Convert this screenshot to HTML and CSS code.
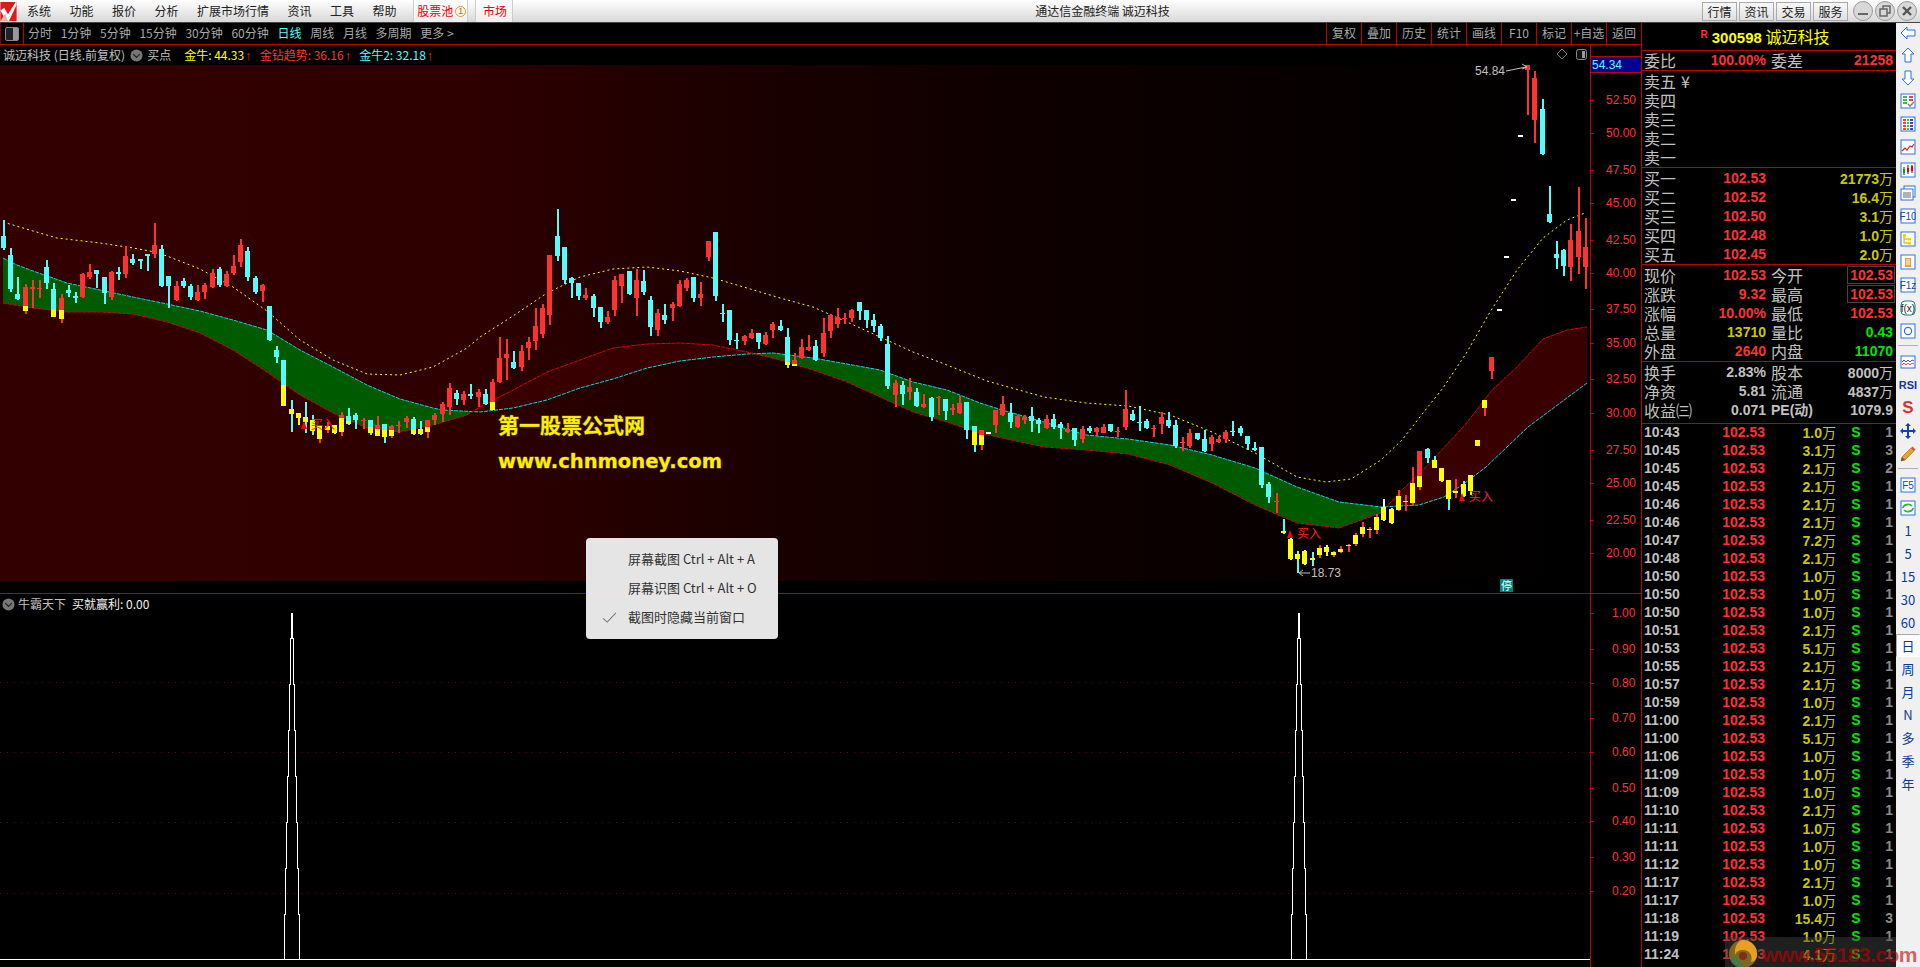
FILE: index.html
```html
<!DOCTYPE html>
<html lang="zh-CN">
<head>
<meta charset="UTF-8" />
<title>通达信金融终端 诚迈科技</title>
<link rel="stylesheet" href="styles.css">
</head>
<body>

<header class="topbar">
  <div class="menu">
    <svg class="logo" viewBox="0 0 17 20"><rect width="17" height="20" fill="#e01818"/><path d="M0 9 L4 6 L8 13 L16 0 L17 0 L17 3 L9 20 L6 20 Z" fill="#fff"/><path d="M0 20 L5 12 L8 20 Z" fill="#f4b0a0"/></svg>
    <span>系统</span><span>功能</span><span>报价</span><span>分析</span><span>扩展市场行情</span><span>资讯</span><span>工具</span><span>帮助</span>
    <span class="menu-btn pool">股票池<i class="coin">1</i></span>
    <span class="menu-btn market">市场</span>
  </div>
  <div class="app-title">通达信金融终端 诚迈科技</div>
  <div class="window-ctl">
    <span class="ctl-btn">行情</span><span class="ctl-btn">资讯</span><span class="ctl-btn">交易</span><span class="ctl-btn">服务</span>
    <svg class="round-btn" viewBox="0 0 20 20"><circle cx="10" cy="10" r="9.5" fill="#d8d8d8" stroke="#999"/><rect x="5" y="12" width="10" height="2" fill="#666"/></svg>
    <svg class="round-btn" viewBox="0 0 20 20"><circle cx="10" cy="10" r="9.5" fill="#d8d8d8" stroke="#999"/><path d="M5 8h7v7H5zM8 8V5h7v7h-3" fill="none" stroke="#666" stroke-width="1.5"/></svg>
    <svg class="round-btn" viewBox="0 0 20 20"><circle cx="10" cy="10" r="9.5" fill="#d8d8d8" stroke="#999"/><path d="M6 6l8 8M14 6l-8 8" stroke="#555" stroke-width="2.4"/></svg>
  </div>
</header>

<div class="workspace">
  <main class="charts">
    <nav class="periodbar">
      <span class="corner"><i class="corner-icon"></i></span>
      <div class="periods">
        <span>分时</span><span>1分钟</span><span>5分钟</span><span>15分钟</span><span>30分钟</span><span>60分钟</span><span class="on">日线</span><span>周线</span><span>月线</span><span>多周期</span><span>更多 &gt;</span>
      </div>
      <div class="chart-btns">
        <span>复权</span><span>叠加</span><span>历史</span><span>统计</span><span>画线</span><span>F10</span><span>标记</span><span>+自选</span><span>返回</span>
      </div>
    </nav>

    <section class="pane pane-main">
      <svg id="mainChart" class="plot" viewBox="0 45 1641 548"></svg>
      <div class="legend">
        <span class="gray">诚迈科技 (日线.前复权)</span>
        <svg class="chevron" viewBox="0 0 14 14"><circle cx="7" cy="7" r="6.5" fill="#777"/><path d="M3.5 5.5L7 9l3.5-3.5" fill="none" stroke="#222" stroke-width="1.4"/></svg>
        <span class="gray">买点</span>
        <span class="yellow ind">金牛: 44.33<b>↑</b></span>
        <span class="red ind2">金钻趋势: 36.16<b>↑</b></span>
        <span class="cyan ind2">金牛2: 32.18<b>↑</b></span>
      </div>
    </section>

    <section class="pane pane-sub">
      <svg id="subChart" class="plot" viewBox="0 594 1641 373"></svg>
      <div class="legend">
        <svg class="chevron first" viewBox="0 0 14 14"><circle cx="7" cy="7" r="6.5" fill="#777"/><path d="M3.5 5.5L7 9l3.5-3.5" fill="none" stroke="#222" stroke-width="1.4"/></svg>
        <span class="gray">牛霸天下</span>
        <span class="white">买就赢利: 0.00</span>
      </div>
    </section>

    <div class="shot-menu">
      <div class="shot-item">屏幕截图 Ctrl + Alt + A</div>
      <div class="shot-item">屏幕识图 Ctrl + Alt + O</div>
      <div class="shot-item"><svg class="tick" viewBox="0 0 16 12"><path d="M1 7l4.5 4L15 1" fill="none" stroke="#777" stroke-width="1.1"/></svg>截图时隐藏当前窗口</div>
    </div>
  </main>

  <aside class="quote">
    <div class="stock-head"><sup>R</sup><b>300598</b> <span>诚迈科技</span></div>

    <div class="q-block single">
      <div class="q-row"><span>委比</span><b class="red">100.00%</b><span class="l2">委差</span><b class="red">21258</b></div>
    </div>

    <div class="q-block">
      <div class="q-row"><span>卖五</span><span class="yen">¥</span></div>
      <div class="q-row"><span>卖四</span></div>
      <div class="q-row"><span>卖三</span></div>
      <div class="q-row"><span>卖二</span></div>
      <div class="q-row"><span>卖一</span></div>
    </div>

    <div class="q-block">
      <div class="q-row"><span>买一</span><b class="red">102.53</b><span class="l2"></span><b class="dim">21773<em>万</em></b></div>
      <div class="q-row"><span>买二</span><b class="red">102.52</b><span class="l2"></span><b class="dim">16.4<em>万</em></b></div>
      <div class="q-row"><span>买三</span><b class="red">102.50</b><span class="l2"></span><b class="dim">3.1<em>万</em></b></div>
      <div class="q-row"><span>买四</span><b class="red">102.48</b><span class="l2"></span><b class="dim">1.0<em>万</em></b></div>
      <div class="q-row"><span>买五</span><b class="red">102.45</b><span class="l2"></span><b class="dim">2.0<em>万</em></b></div>
    </div>

    <div class="q-block">
      <div class="q-row"><span>现价</span><b class="red">102.53</b><span class="l2">今开</span><b class="red"><u>102.53</u></b></div>
      <div class="q-row"><span>涨跌</span><b class="red">9.32</b><span class="l2">最高</span><b class="red"><u>102.53</u></b></div>
      <div class="q-row"><span>涨幅</span><b class="red">10.00%</b><span class="l2">最低</span><b class="red">102.53</b></div>
      <div class="q-row"><span>总量</span><b class="dim">13710</b><span class="l2">量比</span><b class="green">0.43</b></div>
      <div class="q-row"><span>外盘</span><b class="red">2640</b><span class="l2">内盘</span><b class="green">11070</b></div>
    </div>

    <div class="q-block last">
      <div class="q-row"><span>换手</span><b class="gray">2.83%</b><span class="l2">股本</span><b class="gray">8000<em>万</em></b></div>
      <div class="q-row"><span>净资</span><b class="gray">5.81</b><span class="l2">流通</span><b class="gray">4837<em>万</em></b></div>
      <div class="q-row"><span>收益㈢</span><b class="gray">0.071</b><span class="l2 pe">PE(动)</span><b class="gray">1079.9</b></div>
    </div>

    <div id="ticks" class="ticks"></div>
  </aside>

  <aside class="sidetools">
    <div class="tool"><svg viewBox="0 0 16 16"><path d="M1 8l6-6v3h8v6H7v3z" class="ic"/></svg></div>
    <div class="tool"><svg viewBox="0 0 16 16"><path d="M8 1l6 6h-3v8H5V7H2z" class="ic"/></svg></div>
    <div class="tool"><svg viewBox="0 0 16 16"><path d="M8 15l6-6h-3V1H5v8H2z" class="ic"/></svg></div>
    <div class="tool"><svg viewBox="0 0 16 16"><rect x="1" y="1" width="14" height="14" class="ic"/><path d="M3 4h4M3 7h4M3 10h4" stroke="#0a0" stroke-width="1.5"/><path d="M9 4h4M9 7h4" stroke="#e00" stroke-width="1.5"/><path d="M8 11l2 2 4-4" fill="none" stroke="#888" stroke-width="1.6"/></svg></div>
    <div class="tool"><svg viewBox="0 0 16 16"><rect x="1" y="1" width="14" height="14" class="ic"/><path d="M3 4h3M3 7h3M3 10h3M3 13h3" stroke="#e00" stroke-width="1.4"/><path d="M7 4h2M7 7h2M7 10h2M7 13h2" stroke="#0a0" stroke-width="1.4"/><path d="M10 4h3M10 7h3M10 10h3M10 13h3" stroke="#00c" stroke-width="1.4"/></svg></div>
    <div class="tool"><svg viewBox="0 0 16 16"><rect x="1" y="1" width="14" height="14" class="ic"/><path d="M2 12l3-3 2 2 3-4 2 1 2-3" fill="none" stroke="#e02020" stroke-width="1.2"/></svg></div>
    <div class="tool"><svg viewBox="0 0 16 16"><rect x="1" y="1" width="14" height="14" class="ic"/><path d="M4 5v8M8 3v9M12 3v8" stroke="#222"/><rect x="3" y="7" width="2" height="4" fill="#0a0"/><rect x="7" y="6" width="2" height="4" fill="#e00"/><rect x="11" y="4" width="2" height="5" fill="#e00"/></svg></div>
    <div class="tool"><svg viewBox="0 0 16 16"><rect x="4" y="1" width="11" height="11" class="ic"/><rect x="1" y="4" width="12" height="11" class="ic"/><path d="M3 8h8M3 10h8M3 12h8" stroke="#666"/></svg></div>
    <div class="tool"><svg viewBox="0 0 16 16"><rect x="1" y="1" width="14" height="14" class="ic"/><text x="8" y="12" class="ic-txt">F10</text></svg></div>
    <div class="tool"><svg viewBox="0 0 16 16"><rect x="1" y="1" width="14" height="14" class="ic"/><path d="M4 5v7h4M4 8h4" fill="none" stroke="#d90"/><rect x="3" y="3" width="3" height="3" fill="#fc0"/><rect x="8" y="7" width="3" height="2.5" fill="#fc0"/><rect x="8" y="11" width="3" height="2.5" fill="#fc0"/></svg></div>
    <div class="tool"><svg viewBox="0 0 16 16"><rect x="1" y="1" width="14" height="14" class="ic"/><rect x="5" y="4" width="6" height="9" fill="#f0a030"/><path d="M6 6h4M6 8h4M6 10h4" stroke="#fff"/></svg></div>
    <div class="tool"><svg viewBox="0 0 16 16"><rect x="1" y="1" width="14" height="14" class="ic"/><text x="8" y="12" class="ic-txt">F1z</text></svg></div>
    <div class="tool"><svg viewBox="0 0 16 16"><rect x="1" y="1" width="14" height="14" rx="4" class="ic teal"/><text x="8" y="12" class="ic-txt dark">f(x)</text></svg></div>
    <div class="tool"><svg viewBox="0 0 16 16"><rect x="1" y="1" width="14" height="14" class="ic"/><circle cx="8" cy="8" r="3.6" fill="none" stroke="#2b72e8" stroke-width="1.2"/></svg></div>
    <div class="tool-sep"></div>
    <div class="tool"><svg viewBox="0 0 16 16"><rect x="1" y="2" width="14" height="12" class="ic"/><path d="M2 8l2-2 2 2 2-2 2 2 2-2 2 1" fill="none" stroke="#33c" stroke-width=".9"/><path d="M2 11l2-2 2 2 2-2 2 2 2-2 2 1" fill="none" stroke="#e33" stroke-width=".9"/></svg></div>
    <div class="tool rsi">RSI</div>
    <div class="tool dollar">S</div>
    <div class="tool"><svg viewBox="0 0 16 16"><path d="M8 0l3 3H9v4h4V5l3 3-3 3V9H9v4h2l-3 3-3-3h2V9H3v2L0 8l3-3v2h4V3H5z" fill="#1040c0"/></svg></div>
    <div class="tool"><svg viewBox="0 0 16 16"><path d="M1 15l1-4L11 2l3 3-9 9z" fill="#f0a020" stroke="#a06010" stroke-width=".6"/><path d="M11 2l1.500-1.500 3 3L14 5z" fill="#e05040"/><path d="M1 15l1-4 3 3z" fill="#555"/></svg></div>
    <div class="tool-sep"></div>
    <div class="tool"><svg viewBox="0 0 16 16"><rect x="1" y="1" width="14" height="14" class="ic"/><text x="8" y="12" class="ic-txt">F5</text></svg></div>
    <div class="tool"><svg viewBox="0 0 16 16"><rect x="1" y="1" width="14" height="14" class="ic"/><path d="M3 8a5 4 0 0 1 9-2M13 8a5 4 0 0 1-9 2" fill="none" stroke="#30b040" stroke-width="1.800"/></svg></div>
    <div class="tool num">1</div>
    <div class="tool num">5</div>
    <div class="tool num">15</div>
    <div class="tool num">30</div>
    <div class="tool num">60</div>
    <div class="tool num cur">日</div>
    <div class="tool num">周</div>
    <div class="tool num">月</div>
    <div class="tool num">N</div>
    <div class="tool num">多</div>
    <div class="tool num">季</div>
    <div class="tool num">年</div>
  </aside>
</div>

<div class="watermark">
  <svg class="wm-logo" viewBox="0 0 30 30"><circle cx="15" cy="15" r="14" fill="#7a6a20"/><path d="M15 1a14 14 0 0 1 14 14c0 5-3 8-6 8 2-6-1-12-8-12-4 0-7 2-8 5C6 8 10 1 15 1z" fill="#e8a020"/><path d="M3 20c3 6 9 9 15 8-5-2-9-5-9-10-3 0-5 1-6 2z" fill="#2f7f60"/><circle cx="15" cy="17" r="4" fill="#8a2a1a"/></svg>
  <span class="wm-text">www.55183.com</span>
</div>

<script src="chart.js"></script>
</body>
</html>
```

FILE: styles.css
```css
/* base */
* {
  box-sizing: border-box;
}

body {
  margin: 0;
  width: 1920px;
  height: 967px;
  overflow: hidden;
  position: relative;
  display: flex;
  flex-direction: column;
  background: #000;
  font-family: "Noto Sans CJK SC", "Liberation Sans", sans-serif;
  font-size: 12px;
  color: #c0c0c0;
}

.red { color: #ff3232; }
.yellow { color: #ffff00; }
.cyan { color: #54fcfc; }
.green { color: #00e600; }
.gray { color: #c0c0c0; }
.white { color: #f0f0f0; }
.dim { color: #c8c800; }

/* title bar */
.topbar {
  height: 23px;
  flex: none;
  display: flex;
  justify-content: space-between;
  align-items: center;
  background: linear-gradient(#ffffff, #d8d8d8);
  border-bottom: 1px solid #444;
  color: #222;
  line-height: 22px;
}

.menu {
  display: flex;
  align-items: center;
  gap: 18.5px;
  width: 513px;
  height: 22px;
}

.logo {
  width: 17px;
  height: 19px;
  margin-right: -8.5px;
  flex: none;
}

.menu > span {
  white-space: nowrap;
}

.menu .menu-btn {
  display: flex;
  align-items: center;
  height: 22px;
  color: #f00000;
  border-left: 1px solid #ccc;
  border-right: 1px solid #ccc;
  background: linear-gradient(#fff, #eee);
}

.pool {
  width: 55px;
  margin-left: -2px;
  padding-left: 3px;
}

.market {
  width: 38px;
  margin-left: -11.5px;
  padding-left: 7px;
}

.coin {
  width: 11px;
  height: 11px;
  margin-left: 2px;
  border: 1px solid #e09a20;
  border-radius: 50%;
  color: #c07000;
  font: normal 9px/9px "Liberation Sans", sans-serif;
  text-align: center;
}

.app-title {
  margin-left: -10px;
  color: #222;
  white-space: nowrap;
}

.window-ctl {
  display: flex;
  align-items: center;
  width: 218px;
  height: 22px;
  gap: 2px;
}

.ctl-btn {
  width: 35px;
  height: 19px;
  line-height: 17px;
  text-align: center;
  border: 1px solid #aaa;
  background: linear-gradient(#f8f8f8, #e0e0e0);
}

.round-btn {
  width: 20px;
  height: 20px;
  flex: none;
}

.round-btn:first-of-type {
  margin-left: 3px;
}

/* main layout */
.workspace {
  flex: 1;
  display: flex;
  min-height: 0;
}

.charts {
  width: 1641px;
  flex: none;
  display: flex;
  flex-direction: column;
  position: relative;
}

.periodbar {
  height: 22px;
  flex: none;
  display: flex;
  align-items: stretch;
  border-bottom: 1px solid #c00000;
  color: #a8a8a8;
  line-height: 20px;
}

.corner {
  width: 24px;
  border-right: 1px solid #c00000;
  border-left: 1px solid #8a0000;
  display: flex;
  align-items: center;
  justify-content: center;
}

.corner-icon {
  width: 14px;
  height: 14px;
  border: 1px solid #888;
  border-radius: 2px;
  background: linear-gradient(90deg, #222 55%, #999 55%);
}

.periods {
  display: flex;
  gap: 8.7px;
  margin-left: 4px;
}

.periods .on {
  color: #54fcfc;
}

.chart-btns {
  margin-left: auto;
  display: flex;
}

.chart-btns span {
  width: 35px;
  text-align: center;
  border-left: 1px solid #c00000;
  white-space: nowrap;
}

.pane {
  position: relative;
}

.pane-main {
  height: 549px;
  flex: none;
  border-bottom: 1px solid #c00000;
}

.pane-sub {
  flex: 1;
  min-height: 0;
}

.plot {
  display: block;
  width: 1641px;
  height: 100%;
}

.legend {
  position: absolute;
  top: 0;
  left: 3px;
  height: 20px;
  display: flex;
  align-items: center;
  line-height: 20px;
  white-space: nowrap;
}

.legend b {
  padding-left: 1px;
  font-weight: bold;
  font-size: 13px;
  color: #ff3232;
  font-family: "Liberation Sans", sans-serif;
}

.chevron {
  width: 13px;
  height: 13px;
  margin: 0 4px 0 5px;
}

.chevron.first {
  margin-left: -1px;
  margin-right: 3px;
}

.ind {
  margin-left: 13px;
}

.ind2 {
  margin-left: 8px;
}

.pane-sub .white {
  margin-left: 6px;
}

/* chart text, all inside the svg */
.axis-label {
  font: 12px "Liberation Sans", sans-serif;
  fill: #ff3232;
}

.hi-lo {
  font: 12px "Liberation Sans", sans-serif;
  fill: #c0c0c0;
}

.box-label {
  font: 12px "Liberation Sans", sans-serif;
  fill: #54fcfc;
}

.buy-label {
  font: 12px "Noto Sans CJK SC", sans-serif;
  fill: #ff2020;
}

.halt-label {
  font: 11px "Noto Sans CJK SC", sans-serif;
  fill: #fff;
}

.mark-cn {
  font: bold 21px "Noto Sans CJK SC", sans-serif;
  fill: #ffee00;
  stroke: #6a5a00;
  stroke-width: 1px;
  paint-order: stroke;
}

.mark-en {
  font: bold 19.5px "DejaVu Sans", sans-serif;
  fill: #ffee00;
  stroke: #6a5a00;
  stroke-width: 1px;
  paint-order: stroke;
}

/* screenshot context menu */
.shot-menu {
  position: absolute;
  left: 586px;
  top: 515px;
  width: 192px;
  height: 101px;
  padding: 7px 0 0;
  background: rgba(238, 238, 238, 0.96);
  border-radius: 4px;
  color: #333;
  font-size: 13px;
}

.shot-item {
  position: relative;
  height: 29px;
  line-height: 28px;
  padding-left: 42px;
  white-space: nowrap;
}

.tick {
  position: absolute;
  left: 16px;
  top: 9px;
  width: 15px;
  height: 11px;
}

/* quote panel */
.quote {
  width: 255px;
  flex: none;
  border-left: 1px solid #c00000;
  overflow: hidden;
}

.stock-head {
  height: 28px;
  border-bottom: 1px solid #c00000;
  text-align: center;
  color: #ffff00;
  font-size: 16px;
  line-height: 26px;
  padding-right: 8px;
  white-space: nowrap;
}

.stock-head sup {
  color: #ff3232;
  font: bold 10px "Liberation Sans", sans-serif;
  vertical-align: 5px;
  margin-right: 4px;
}

.stock-head b {
  font: bold 15px "Liberation Sans", sans-serif;
}

.q-block {
  height: 97px;
  padding: 1px 3px 0 2px;
  border-bottom: 1px solid #c00000;
}

.q-block.single {
  height: 20px;
  padding-top: 0;
}

.q-block.last {
  height: 62px;
}

.q-row {
  display: grid;
  grid-template-columns: 48px 74px 53px 74px;
  height: 19px;
  line-height: 19px;
  font-size: 16px;
  white-space: nowrap;
}

.q-row b {
  font: bold 14px/19px "Liberation Sans", sans-serif;
  text-align: right;
}

.q-row em {
  font: normal 14px/19px "Noto Sans CJK SC", sans-serif;
}

.q-row u {
  display: inline-block;
  text-decoration: none;
  height: 18px;
  line-height: 16px;
  margin-right: -2px;
  padding: 0 1px 0 2px;
  border: 1px solid #444;
}

.l2 {
  padding-left: 5px;
}

.q-row .pe {
  font: bold 14px/19px "Liberation Sans", "Noto Sans CJK SC", sans-serif;
}

.yen {
  text-align: left;
  margin-left: -11px;
}

.tick-row {
  display: grid;
  grid-template-columns: 56px 65px 71px 40px 17px;
  height: 18px;
  padding: 0 3px 0 2px;
  font: bold 14px/18px "Liberation Sans", sans-serif;
  white-space: nowrap;
}

.tick-row span:nth-child(2),
.tick-row span:nth-child(3),
.tick-row span:nth-child(5) {
  text-align: right;
}

.tick-row span:nth-child(4) {
  text-align: center;
}

.tick-row em {
  font: normal 14px/18px "Noto Sans CJK SC", sans-serif;
}

.tick-row .count {
  color: #8c8c8c;
}

.ticks {
  margin-top: -1px;
}

/* right tool strip */
.sidetools {
  width: 24px;
  flex: none;
  background: #f0f0f0;
  display: flex;
  flex-direction: column;
  align-items: center;
}

.tool {
  width: 24px;
  height: 23px;
  flex: none;
  display: flex;
  align-items: center;
  justify-content: center;
}

.tool:first-child {
  height: 20px;
}

.tool svg {
  width: 16px;
  height: 16px;
}

.ic {
  fill: #fff;
  stroke: #2b72e8;
  stroke-width: 1;
}

.ic.teal {
  stroke: #108080;
}

.ic-txt {
  font: 10px "Liberation Sans", sans-serif;
  fill: #1848b0;
  text-anchor: middle;
}

.ic-txt.dark {
  fill: #222;
}

.tool-sep {
  height: 8px;
  width: 20px;
  flex: none;
  background: linear-gradient(transparent 3px, #b0b0b0 3px, #b0b0b0 4px, transparent 4px);
}

.rsi {
  font: bold 11px "Liberation Sans", sans-serif;
  color: #2030a0;
}

.dollar {
  font: bold 17px "Liberation Sans", sans-serif;
  color: #e03030;
}

.num {
  color: #0a3c9c;
  font-size: 13px;
}

.cur {
  background: #fbfbfb;
  border: 1px solid #fff;
  border-top-color: #aaa;
  border-left-color: #aaa;
}

/* site stamp bottom right */
.watermark {
  position: absolute;
  left: 1725px;
  top: 937px;
  width: 195px;
  height: 30px;
  display: flex;
  align-items: center;
  background: linear-gradient(90deg, rgba(70, 70, 70, 0.45) 171px, transparent 171px);
  overflow: hidden;
}

.wm-logo {
  width: 30px;
  height: 30px;
  flex: none;
  margin: 3px 0 0 3px;
}

.wm-text {
  margin-left: 4px;
  margin-top: 6px;
  font: bold 21px "Liberation Sans", sans-serif;
  letter-spacing: -0.5px;
  color: rgba(190, 0, 0, 0.62);
  white-space: nowrap;
}
```

FILE: chart.js
```js
// candle rows: [high, bodyTop, bodyBottom, low, colour, yellowFrom, wickColour]
// rows A/B are read off 3x crops, so y = base + v / 3. Row C is plain page y.
const rowsA = [
  [120,168,203,210,'c'],[205,225,328,335,'c'],[292,342,358,360,'c'],[312,322,393,402,'r',378],[300,322,326,385,'r'],
  [300,324,327,354,'r'],[240,262,310,327,'c'],[310,327,411,411,'c',390],[343,355,417,429,'r',390],[316,330,340,352,'c'],
  [336,349,354,369,'c'],[278,281,352,354,'r'],[252,276,291,298,'r'],[270,270,282,324,'c'],[291,291,339,372,'c'],
  [273,275,350,359,'r'],[262,275,283,300,'c'],[198,228,282,294,'r'],[222,236,250,255,'c'],[238,238,242,267,'c'],
  [222,222,228,273,'c'],[129,195,222,234,'r'],[195,207,318,321,'c'],[288,288,318,384,'c'],[303,318,360,363,'r'],
  [295,303,318,323,'c'],[312,318,351,360,'c'],[315,336,360,363,'r'],[309,316,336,357,'r'],[267,279,321,324,'r'],
  [262,267,315,321,'c'],[273,282,318,321,'r'],[225,258,279,285,'r'],[178,195,246,261,'r'],[201,213,291,303,'c'],
  [288,294,336,342,'c'],[312,315,333,366,'r'],[378,378,480,483,'c'],[498,510,531,549,'c'],[540,540,678,678,'c',615],
  [660,687,702,755,'y',null,'c'],[699,699,714,735,'y'],[666,711,725,760,'y',null,'c'],[705,720,752,765,'y',null,'c'],[737,737,777,789,'y',null,'r'],
  [725,737,750,759,'y',null,'r'],[735,735,759,762,'y'],[696,705,756,768,'r',714],[684,708,732,735,'c',723],[699,705,720,747,'c'],
  [714,720,723,747,'r'],[720,720,760,765,'c',741],[708,735,768,768,'r',747],[732,732,771,789,'c',750],[735,738,768,774,'r',750],
  [723,735,738,759,'r'],[708,714,726,744,'r'],[711,717,762,765,'c',750],[723,747,762,765,'c',747],[720,720,756,774,'r',741],
  [699,705,720,735,'r'],[666,672,702,726,'r'],[609,624,681,705,'r'],[630,639,657,675,'c'],[633,642,660,675,'r'],
  [612,642,648,657,'c'],[627,636,651,681,'r'],[627,642,672,675,'c'],[597,606,690,690,'r',666],
  [471,534,606,609,'r'],[477,522,534,600,'r'],[513,546,564,567,'c'],[495,513,561,573,'r'],[471,486,504,540,'r'],
  [384,438,483,510,'r'],[372,384,462,474,'r'],[225,225,405,435,'r'],[87,168,228,243,'c'],[201,201,300,312,'c'],
  [291,294,309,354,'c'],[309,309,348,360,'c'],[324,345,354,360,'r'],[342,348,384,411,'c'],[381,381,426,444,'c'],
  [393,411,426,432,'r'],[288,300,390,408,'r'],[282,282,318,369,'r'],[273,273,342,345,'c'],[267,300,354,408,'r'],
  [270,303,336,345,'c'],[348,360,441,468,'c'],[387,399,450,468,'r'],[372,405,420,432,'c'],[366,372,384,423,'r'],
  [300,312,378,381,'r'],[294,300,324,333,'r'],[291,291,354,366,'c'],[306,342,354,378,'r'],[183,183,231,243,'r'],
  [156,156,348,363,'c'],[372,399,402,426,'c'],[390,390,480,495,'c'],[460,480,481,507,'c'],[465,468,483,495,'r'],
  [447,459,474,477,'r'],[459,459,486,507,'c'],[456,465,492,495,'r'],[426,432,450,474,'r'],[420,438,450,453,'c'],
  [444,471,555,564,'c',546],[519,540,558,558,'r',552],[477,501,534,537,'r'],[465,501,510,513,'r'],[480,498,540,543,'c'],
  [414,459,519,531,'r'],[402,405,453,474,'r'],[384,411,432,444,'r'],[399,414,417,432,'r'],[387,390,414,426,'r'],
  [366,366,393,420,'c'],[390,390,420,444,'c'],[402,420,438,456,'c'],[432,438,474,483,'c'],[468,492,618,627,'c'],
  [600,609,645,681,'r'],[603,615,642,675,'c'],[594,621,636,660,'r'],[624,636,678,681,'c'],[642,672,680,684,'r'],
  [651,654,711,723,'c'],[648,651,654,705,'r'],[657,657,693,720,'c'],[672,684,690,705,'r'],[648,669,699,702,'r'],
  [666,666,750,777,'c'],[738,738,795,816,'c',756]
];

const rowsB = [
  [150,150,195,210,'r',165],[150,155,162,168,'w'],[90,90,135,160,'r'],[48,72,105,108,'r'],[70,100,127,145,'c'],
  [106,108,140,143,'r'],[105,112,120,132,'r'],[82,108,122,156,'c'],[115,120,132,158,'c'],[105,117,145,148,'r'],
  [102,117,140,148,'c'],[125,133,145,177,'c'],[130,146,156,160,'r'],[143,145,180,197,'c'],[138,147,177,188,'r'],
  [138,143,152,158,'c'],[140,145,155,167,'r'],[132,140,158,160,'r'],[132,133,152,155,'c'],[142,152,155,172,'r'],
  [30,87,140,150,'r'],[90,102,120,122,'c'],[78,125,128,152,'c'],[118,122,145,148,'c'],[135,145,148,170,'r'],
  [97,111,133,162,'r'],[97,120,138,143,'c'],[120,135,197,205,'c'],[172,187,190,212,'r'],[148,160,197,205,'r'],
  [158,160,178,180,'c'],[150,177,213,217,'c'],[165,170,192,212,'r'],[168,178,186,190,'r'],[150,157,178,190,'r'],
  [122,152,155,168,'c'],[138,143,160,167,'c'],[168,168,192,210,'c'],[187,204,210,212,'c'],[200,200,316,324,'c'],
  [306,312,352,368,'c'],[340,362,365,400,'r'],[416,452,460,462,'y',null,'c'],[470,477,537,540,'y'],[512,522,537,580,'y',null,'c'],
  [510,512,552,554,'y'],[516,534,540,558,'y',null,'c'],[495,504,525,534,'y',null,'r'],[495,500,516,528,'y'],[512,517,525,532,'y',null,'r'],
  [498,507,516,520,'y',null,'r'],[491,495,498,517,'y',null,'r'],[460,465,492,498,'y',null,'r'],[426,441,462,470,'y',null,'r'],[441,447,450,474,'y',null,'r'],
  [402,411,450,462,'y',null,'r'],[357,381,420,423,'y',null,'w'],[384,387,429,432,'y'],[330,348,390,393,'y',null,'r'],[345,363,366,393,'y',null,'r'],
  [262,309,369,378,'y',null,'r'],[213,213,321,330,'r',288],[204,207,234,250,'c'],[228,240,264,264,'y',null,'c'],[264,264,303,306,'y'],
  [300,300,357,390,'y',null,'c'],[297,333,340,354,'y',null,'r'],[303,312,348,351,'y',null,'c'],[285,285,333,345,'y']
];

const rowsC = [
  [440,440,446,446,'y'],[400,400,408,416,'y',null,'r'],[357,357,371,379,'r'],
  [309,309,311,311,'w'],[256,256,258,258,'w'],[199,199,201,201,'w'],[135,135,137,137,'w'],
  [65,65,70,115,'r'],[71,78,120,143,'r'],[99,109,154,155,'c'],[186,214,222,223,'c'],[241,254,258,269,'c'],
  [249,250,266,276,'c'],[224,240,267,281,'r'],[187,231,257,274,'r'],[218,247,267,289,'r']
];

const upperLine = [[3,258],[17,265],[33,271],[67,283],[100,290],[133,297],[167,304],[200,311],[233,320],[267,330],[300,350],[333,367],[367,385],[400,399],[433,408],[443,410],[480,412],[513,408],[547,400],[580,388],[613,379],[647,368],[680,361],[713,357],[747,354],[773,353],[813,358],[847,364],[880,370],[913,382],[947,390],[980,403],[1002,410],[1044,422],[1086,435],[1128,439],[1170,445],[1212,455],[1255,468],[1297,487],[1339,502],[1381,507],[1419,505],[1444,497],[1465,483],[1486,467],[1528,427],[1587,383]];
const lowerLine = [[3,303],[33,308],[67,312],[100,312],[133,314],[167,322],[200,333],[233,350],[267,372],[300,395],[333,413],[367,428],[400,432],[433,425],[467,415],[480,407],[513,390],[547,372],[580,360],[613,348],[647,344],[680,343],[713,345],[747,352],[780,360],[813,370],[847,382],[880,397],[913,412],[947,422],[980,433],[1002,438],[1044,447],[1086,450],[1128,454],[1170,465],[1212,483],[1255,505],[1297,523],[1339,528],[1381,513],[1402,490],[1423,470],[1465,425],[1492,390],[1517,367],[1543,339],[1567,330],[1587,327]];
const slowLine = [[3,222],[33,231],[57,238],[100,243],[133,248],[150,251],[167,256],[200,269],[233,287],[267,311],[300,340],[333,360],[367,374],[400,375],[433,367],[467,348],[480,337],[513,316],[547,293],[580,277],[613,269],[647,267],[680,271],[713,278],[747,288],[780,298],[813,307],[847,322],[880,337],[913,352],[947,365],[987,381],[1044,397],[1086,403],[1128,406],[1170,415],[1212,432],[1255,453],[1297,477],[1326,482],[1351,479],[1381,460],[1402,440],[1423,413],[1443,388],[1467,352],[1490,312],[1517,270],[1543,238],[1567,220],[1585,213]];

const COLORS = { c: '#54fcfc', r: '#ff3232', y: '#ffff00', w: '#ffffff' };
const LINE_RED = '#c00000';

function rect(x, y, w, h, fill) {
  return `<rect x="${x}" y="${y}" width="${w}" height="${Math.max(h, 1)}" fill="${fill}" shape-rendering="crispEdges"/>`;
}

function valueAt(line, x) {
  for (let i = 1; i < line.length; i++) {
    if (x <= line[i][0]) {
      const [x0, y0] = line[i - 1];
      const [x1, y1] = line[i];
      return y0 + (y1 - y0) * (x - x0) / (x1 - x0);
    }
  }
  return line[line.length - 1][1];
}

function polyline(line, color, dash, width) {
  const pts = line.map(p => p.join(',')).join(' ');
  return `<polyline points="${pts}" fill="none" stroke="${color}" stroke-width="${width}" stroke-dasharray="${dash}"/>`;
}

// green where the upper line is on top, dark red where the two have swapped
function bandFill() {
  let out = '';
  let run = [];
  let sign = 0;
  const flush = () => {
    if (run.length > 1) {
      const top = run.map(r => `${r[0]},${r[1]}`);
      const bottom = run.slice().reverse().map(r => `${r[0]},${r[2]}`);
      out += `<polygon points="${top.concat(bottom).join(' ')}" fill="${sign > 0 ? '#005a00' : '#380000'}"/>`;
    }
  };
  for (let x = 3; x <= 1587; x += 2) {
    const a = valueAt(upperLine, x);
    const b = valueAt(lowerLine, x);
    const s = a < b ? 1 : -1;
    if (s !== sign) {
      flush();
      run = run.length ? [run[run.length - 1]] : [];
      sign = s;
    }
    run.push([x, a, b]);
  }
  flush();
  return out;
}

function candle(i, row, base, scale) {
  const y = v => Math.round(base + v * scale);
  const [hi, top, bot, lo, col, yellowFrom, wick] = row;
  const x = Math.round(3 + 7.19 * i);
  const fill = COLORS[col];
  let out = rect(x, y(hi), 2, y(lo) - y(hi), COLORS[wick || col]);
  if (col === 'w') {
    return rect(x - 2, y(top), 5, y(bot) - y(top), fill);
  }
  if (yellowFrom) {
    out += rect(x - 2, y(top), 5, y(yellowFrom) - y(top), fill);
    out += rect(x - 2, y(yellowFrom), 5, y(bot) - y(yellowFrom), COLORS.y);
  } else {
    out += rect(x - 2, y(top), 5, y(bot) - y(top), fill);
  }
  return out;
}

function buyMark(x, cy) {
  return `<polygon points="${x - 3},${cy + 4} ${x + 3},${cy + 4} ${x},${cy - 4}" fill="#ff0000"/>` +
    `<text x="${x + 7}" y="${cy + 4}" class="buy-label">买入</text>`;
}

function axis(labels, top, bottom) {
  let out = rect(1590, top, 1, bottom - top, LINE_RED);
  labels.forEach(([txt, y]) => {
    out += rect(1590, y, 4, 1, LINE_RED);
    out += `<text x="${txt.length > 4 ? 1606 : 1612}" y="${y + 4}" class="axis-label">${txt}</text>`;
  });
  return out;
}

function drawMain() {
  let s = `<defs><linearGradient id="bgFade" x1="0" x2="1" y1="0" y2="0">
    <stop offset="0" stop-color="#330000"/><stop offset="0.3" stop-color="#2e0000"/>
    <stop offset="0.47" stop-color="#1b0000"/><stop offset="0.63" stop-color="#0f0000"/>
    <stop offset="0.82" stop-color="#070000"/><stop offset="1" stop-color="#000000"/>
  </linearGradient></defs>`;
  s += `<rect x="0" y="65" width="1590" height="516" fill="url(#bgFade)"/>`;
  s += bandFill();
  s += polyline(upperLine, '#00dcdc', '4 1', 1);
  s += polyline(lowerLine, '#e00000', '4 1', 1);
  s += polyline(slowLine, '#ffff00', '2 3', 1);

  rowsA.forEach((r, i) => { s += candle(i, r, 180, 1 / 3); });
  rowsB.forEach((r, i) => { s += candle(i + 136, r, 380, 1 / 3); });
  rowsC.forEach((r, i) => { s += candle(i + 205, r, 0, 1); });

  s += buyMark(304, 425) + buyMark(1290, 534) + buyMark(1462, 497);

  // high and low callouts
  s += `<text x="1475" y="75" class="hi-lo">54.84</text><path d="M1506 71 L1526 67 M1522 64 L1527 67 L1522 69" fill="none" stroke="#c0c0c0"/>`;
  s += `<text x="1311" y="577" class="hi-lo">18.73</text><path d="M1300 573 H1310 M1303 570 L1299 573 L1303 576" fill="none" stroke="#c0c0c0"/>`;

  // halted flag and the two corner marks
  s += rect(1500, 579, 13, 13, '#008080') + `<text x="1501" y="590" class="halt-label">停</text>`;
  s += `<path d="M1562 49 L1567 54 L1562 59 L1557 54 Z" fill="none" stroke="#777"/>`;
  s += `<rect x="1576.500" y="49.500" width="10" height="10" rx="2" fill="#111" stroke="#888"/>` + rect(1582, 51, 3, 7, '#999');

  // site text stamped on the chart
  s += `<text x="498" y="433" class="mark-cn">第一股票公式网</text>`;
  s += `<text x="498" y="468" class="mark-en">www.chnmoney.com</text>`;

  s += axis([['52.50',100],['50.00',133],['47.50',170],['45.00',203],['42.50',240],['40.00',273],['37.50',309],['35.00',343],['32.50',379],['30.00',413],['27.50',450],['25.00',483],['22.50',520],['20.00',553]], 45, 593);

  // last price flag on the axis
  s += `<rect x="1590.500" y="56.500" width="51" height="16" fill="#000090" stroke="#c00000"/>`;
  s += `<text x="1592" y="69" class="box-label">54.34</text>`;
  document.getElementById('mainChart').innerHTML = s;
}

function peak(x) {
  let left = `M${x} 613 V638`;
  let right = `M${x + 1} 613 V638`;
  for (let d = 1, y = 638; d <= 7; d++, y += 46) {
    const end = Math.min(y + 46, 959);
    left += `H${x - d} V${end}`;
    right += `H${x + 1 + d} V${end}`;
  }
  return `<path d="${left}${right}" fill="none" stroke="#fff" shape-rendering="crispEdges"/>`;
}

function drawSub() {
  let s = '';
  [682, 752, 822, 893].forEach(y => {
    s += `<line x1="0" x2="1590" y1="${y}.5" y2="${y}.5" stroke="#8a0000" stroke-dasharray="1 6"/>`;
  });
  s += peak(291) + peak(1298);
  s += rect(0, 959, 1590, 1, '#ffffff');
  s += axis([['1.00',613],['0.90',649],['0.80',683],['0.70',718],['0.60',752],['0.50',788],['0.40',821],['0.30',857],['0.20',891]], 594, 967);
  document.getElementById('subChart').innerHTML = s;
}

const tickData = [
  ['10:43','1.0',1],['10:45','3.1',3],['10:45','2.1',2],['10:45','2.1',1],['10:46','2.1',1],['10:46','2.1',1],
  ['10:47','7.2',1],['10:48','2.1',1],['10:50','1.0',1],['10:50','1.0',1],['10:50','1.0',1],['10:51','2.1',1],
  ['10:53','5.1',1],['10:55','2.1',1],['10:57','2.1',1],['10:59','1.0',1],['11:00','2.1',1],['11:00','5.1',1],
  ['11:06','1.0',1],['11:09','1.0',1],['11:09','1.0',1],['11:10','2.1',1],['11:11','1.0',1],['11:11','1.0',1],
  ['11:12','1.0',1],['11:17','2.1',1],['11:17','1.0',1],['11:18','15.4',3],['11:19','1.0',1],['11:24','4.1',1]
];

document.getElementById('ticks').innerHTML = tickData.map(t =>
  `<div class="tick-row"><span class="gray">${t[0]}</span><span class="red">102.53</span>` +
  `<span class="dim">${t[1]}<em>万</em></span><span class="green">S</span><span class="count">${t[2]}</span></div>`
).join('');

drawMain();
drawSub();
```
